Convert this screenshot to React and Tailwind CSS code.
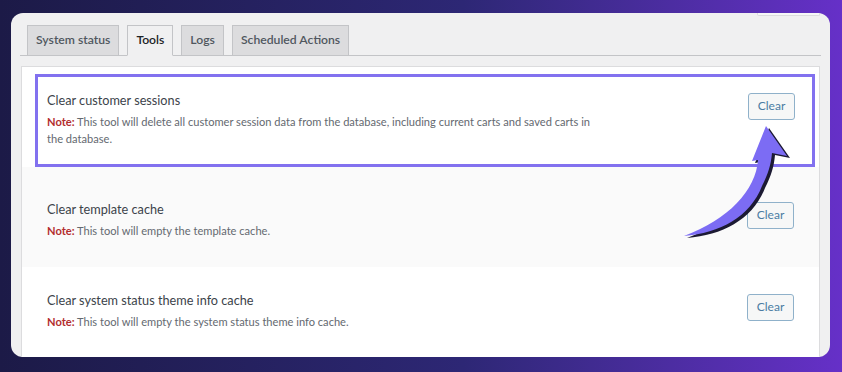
import React from "react";

const tools = [
  {
    title: "Clear customer sessions",
    note: "This tool will delete all customer session data from the database, including current carts and saved carts in the database.",
  },
  {
    title: "Clear template cache",
    note: "This tool will empty the template cache.",
  },
  {
    title: "Clear system status theme info cache",
    note: "This tool will empty the system status theme info cache.",
  },
];

const tabs = ["System status", "Tools", "Logs", "Scheduled Actions"];

const ClearButton = () => (
  <button className="h-[27px] w-[47px] shrink-0 rounded-[3px] border border-[#8fb1ca] bg-[#f6f7f7] text-[12px] text-[#4a7ca3]">
    Clear
  </button>
);

const ToolText = ({ title, note }) => (
  <div className="w-[560px]">
    <div className="text-[12.7px] leading-[18px] text-[#3c434a]">{title}</div>
    <p className="mt-[4px] text-[11.1px] leading-[17px] text-[#646970]">
      <strong className="text-[#b32d2e]">Note:</strong> {note}
    </p>
  </div>
);

// curved annotation arrow pointing at the first "Clear" button
const arrowPath =
  "M86,6 L72,41 L78,40 C76,70 48,100 4,116 C40,113 70,97 82,66 C88,54 91,45 92,33 L107,36 Z";

const Arrow = () => (
  <svg
    className="pointer-events-none absolute left-[680px] top-[120px]"
    width="116"
    height="126"
    viewBox="0 0 116 126"
  >
    <path d={arrowPath} fill="#1c1a33" transform="translate(3,2)" />
    <path d={arrowPath} fill="#7c6cf4" />
  </svg>
);

export default function App() {
  return (
    <div
      className="relative h-[372px] w-[842px] overflow-hidden bg-linear-to-r from-[#1c1a47] via-[#2d2775] via-55% to-[#6630c8] pb-[15px] pl-[11px] pr-[12px] pt-[13px]"
      style={{ fontFamily: "Lato, 'Noto Sans', sans-serif" }}
    >
      <div className="flex h-full flex-col overflow-hidden rounded-[12px] bg-[#f0f0f1]">
        <div className="flex justify-end pr-[10px]">
          <div className="h-[3px] w-[63px] rounded-b-[2px] border-x border-b border-[#dcdcde] bg-[#f6f7f7]" />
        </div>

        <div className="mx-[9px] mt-[9px] flex gap-[8px] border-b border-[#c3c4c7] pl-[7px]">
          {tabs.map((t) => {
            const active = t === "Tools";
            return (
              <div
                key={t}
                className={`-mb-px flex h-[31px] items-center border border-[#c3c4c7] px-[8px] text-[12.2px] font-semibold ${
                  active
                    ? "border-b-[#f0f0f1] bg-[#f0f0f1] text-[#1d2327]"
                    : "bg-[#dcdcde] text-[#50575e]"
                }`}
              >
                {t}
              </div>
            );
          })}
        </div>

        <div className="mr-[10px] ml-[10px] mt-[10px] flex-1 border-x border-t border-[#dcdcde] bg-white">
          <div className="pl-[13px] pr-[4px] pt-[7px]">
            <div className="flex h-[93px] items-start justify-between border-[3px] border-[#8271ef] pl-[9px] pr-[17px] pt-[14px]">
              <ToolText {...tools[0]} />
              <div className="pt-px">
                <ClearButton />
              </div>
            </div>
          </div>

          <div className="flex h-[100px] items-start justify-between bg-[#fafafa] px-[25px] pt-[33px]">
            <ToolText {...tools[1]} />
            <div className="pt-px">
              <ClearButton />
            </div>
          </div>

          <div className="flex items-start justify-between px-[25px] pt-[24px]">
            <ToolText {...tools[2]} />
            <div className="pt-[2px]">
              <ClearButton />
            </div>
          </div>
        </div>
      </div>
      <Arrow />
    </div>
  );
}
